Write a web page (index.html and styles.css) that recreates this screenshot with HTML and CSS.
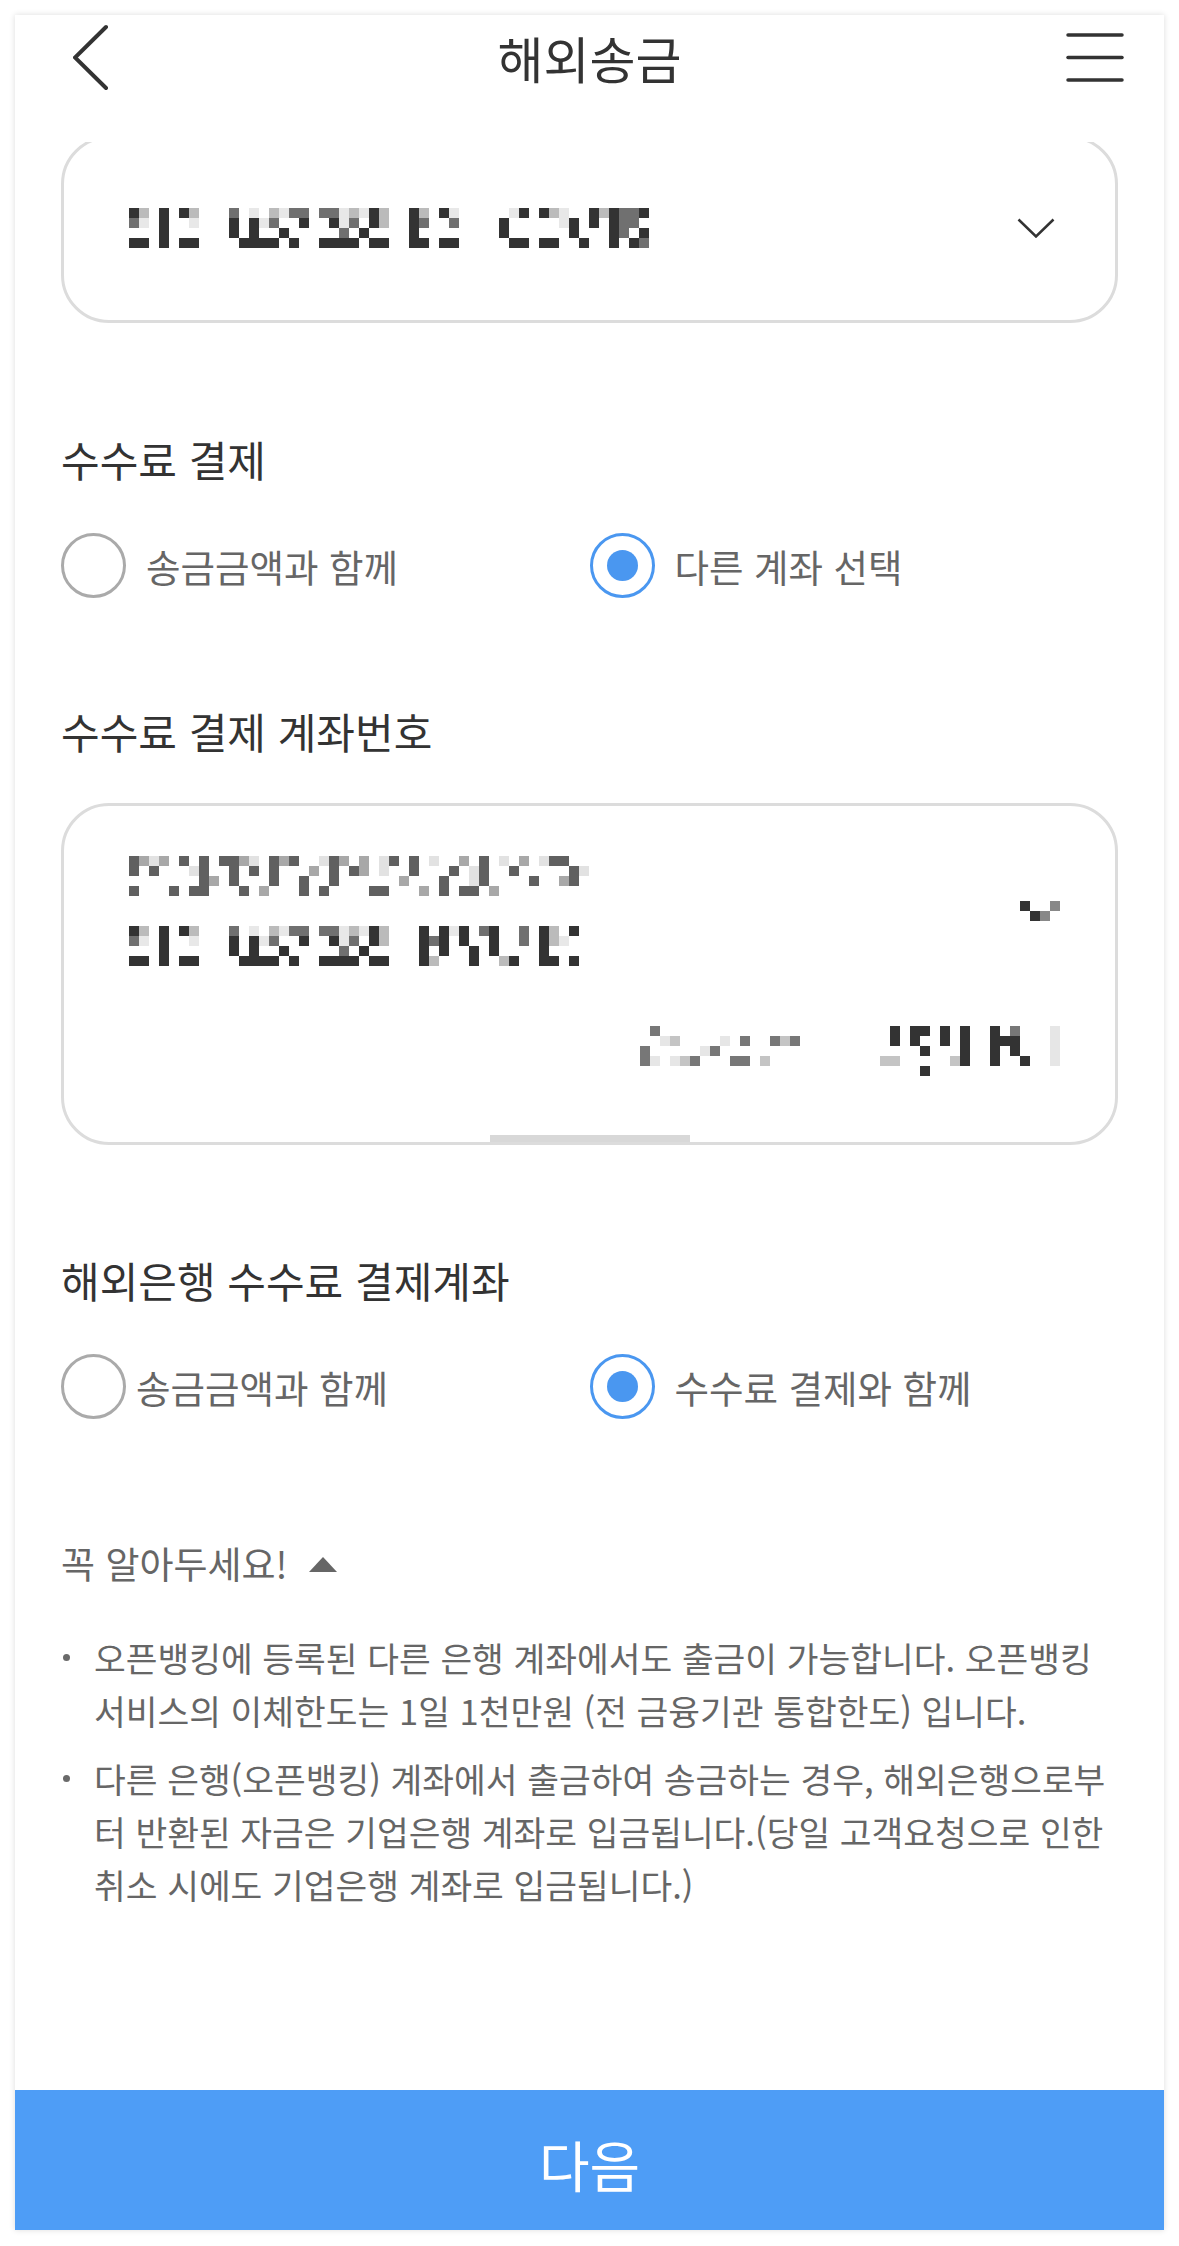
FILE: index.html
```html
<!DOCTYPE html>
<html lang="ko">
<head>
<meta charset="utf-8">
<title>해외송금</title>
<link rel="stylesheet" href="styles.css">
</head>
<body>
<div class="page">
  <div class="phone">
    <header class="topbar">
      <svg class="back" width="40" height="70" viewBox="0 0 40 70"><polyline points="33,4 2,34.5 33,65" fill="none" stroke="#333" stroke-width="4" stroke-linecap="round" stroke-linejoin="miter"/></svg>
      <h1 class="title">해외송금</h1>
      <svg class="menu" width="58" height="50" viewBox="0 0 58 50"><g stroke="#333" stroke-width="3.5" stroke-linecap="round"><line x1="2" y1="2" x2="56" y2="2"/><line x1="2" y1="24.5" x2="56" y2="24.5"/><line x1="2" y1="47" x2="56" y2="47"/></g></svg>
    </header>

    <main class="scroller">
      <div class="content">
        <div class="select-card">
          <svg class="mosaic" width="520" height="40" viewBox="0 0 52 4" shape-rendering="crispEdges">
            <path fill="#e8e8e8" d="M1 1h1v1h-1z M6 1h1v1h-1z M12 0h1v1h-1z M13 1h1v1h-1z M15 0h1v1h-1z M21 0h1v2h-1z M23 0h1v1h-1z M32 0h1v1h-1z M38 0h1v1h-1z M43 0h1v2h-1z"/>
            <path fill="#bbb" d="M1 0h1v1h-1z M6 0h1v1h-1z M14 0h1v1h-1z M22 0h1v1h-1z M25 0h1v2h-1z M29 0h1v1h-1z M42 0h1v1h-1z M47 0h1v1h-1z"/>
            <path fill="#707070" d="M0 1h1v1h-1z M10 0h1v1h-1z M14 1h1v1h-1z M16 0h2v1h-2z M19 0h2v1h-2z M21 2h1v1h-1z M22 1h1v1h-1z M29 1h1v1h-1z M32 1h1v1h-1z M49 0h1v3h-1z M50 0h1v2h-1z M51 3h1v1h-1z"/>
            <path fill="#333" d="M0 0h1v1h-1z M0 3h2v1h-2z M3 0h1v4h-1z M5 0h1v1h-1z M5 3h2v1h-2z M10 1h1v2h-1z M11 3h4v1h-4z M12 1h1v2h-1z M15 2h1v1h-1z M16 3h1v1h-1z M17 1h1v1h-1z M19 3h4v1h-4z M20 1h1v1h-1z M23 2h1v1h-1z M24 0h1v2h-1z M24 3h2v1h-2z M28 0h1v4h-1z M29 3h1v1h-1z M31 0h1v1h-1z M31 3h2v1h-2z M37 1h1v2h-1z M38 3h2v1h-2z M39 0h1v1h-1z M41 0h1v1h-1z M41 3h2v1h-2z M44 1h1v2h-1z M45 3h1v1h-1z M46 0h1v2h-1z M48 0h1v4h-1z M50 3h1v1h-1z M51 0h1v1h-1z M51 2h1v1h-1z"/>
          </svg>
          <svg class="chev" width="38" height="20" viewBox="0 0 38 20"><polyline points="1.5,1.5 19,18.5 36.5,1.5" fill="none" stroke="#333" stroke-width="2.5"/></svg>
        </div>

        <h2 class="section-title">수수료 결제</h2>
        <div class="radio-row">
          <label class="radio"><span class="radio-mark"></span><span>송금금액과 함께</span></label>
          <label class="radio"><span class="radio-mark on"></span><span>다른 계좌 선택</span></label>
        </div>

        <h2 class="section-title section-title--gap">수수료 결제 계좌번호</h2>
        <div class="acct-card">
          <div class="acct-main">
            <div class="acct-lines">
              <svg class="mosaic" width="460" height="40" viewBox="0 0 46 4" shape-rendering="crispEdges">
                <path fill="#e2e2e2" d="M2 0h1v1h-1z M6 1h1v1h-1z M12 0h1v1h-1z M19 0h1v1h-1z M25 0h1v2h-1z M30 0h1v1h-1z M34 1h1v2h-1z M37 0h1v1h-1z M41 0h1v1h-1z M45 1h1v1h-1z"/>
                <path fill="#a8a8a8" d="M1 0h1v1h-1z M3 0h1v1h-1z M8 2h1v1h-1z M11 0h1v1h-1z M13 3h1v1h-1z M15 0h1v1h-1z M18 1h1v1h-1z M21 0h1v1h-1z M23 0h1v2h-1z M27 2h1v1h-1z M29 3h1v1h-1z M33 0h1v1h-1z M36 3h1v1h-1z M39 0h1v1h-1z M43 2h1v1h-1z"/>
                <path fill="#606060" d="M0 0h1v2h-1z M2 1h1v1h-1z M5 0h1v1h-1z M4 3h1v1h-1z M7 0h1v3h-1z M9 0h2v1h-2z M10 1h1v2h-1z M12 1h1v1h-1z M14 0h1v3h-1z M16 0h1v1h-1z M17 2h1v2h-1z M20 0h1v3h-1z M22 1h1v1h-1z M24 3h2v1h-2z M26 0h1v1h-1z M28 0h1v2h-1z M31 2h1v2h-1z M32 1h1v1h-1z M35 0h1v3h-1z M38 1h1v1h-1z M40 2h1v1h-1z M42 0h2v1h-2z M44 1h1v2h-1z M0 3h1v1h-1z M6 3h2v1h-2z M11 3h1v1h-1z M19 3h1v1h-1z M33 3h2v1h-2z"/>
              </svg>
              <svg class="mosaic" width="450" height="40" viewBox="0 0 45 4" shape-rendering="crispEdges">
                <path fill="#e8e8e8" d="M1 1h1v1h-1z M6 1h1v1h-1z M12 0h1v1h-1z M13 1h1v1h-1z M15 0h1v1h-1z M21 0h1v2h-1z M23 0h1v1h-1z M32 0h1v1h-1z M43 1h1v1h-1z"/>
                <path fill="#bbb" d="M1 0h1v1h-1z M6 0h1v1h-1z M14 0h1v1h-1z M22 0h1v1h-1z M25 0h1v2h-1z M30 3h1v1h-1z M37 3h1v1h-1z M42 0h1v2h-1z"/>
                <path fill="#707070" d="M0 1h1v1h-1z M10 0h1v1h-1z M14 1h1v1h-1z M16 0h2v1h-2z M19 0h2v1h-2z M21 2h1v1h-1z M22 1h1v1h-1z M30 1h1v1h-1z M35 0h1v1h-1z M39 0h1v2h-1z"/>
                <path fill="#333" d="M0 0h1v1h-1z M0 3h2v1h-2z M3 0h1v4h-1z M5 0h1v1h-1z M5 3h2v1h-2z M10 1h1v2h-1z M11 3h4v1h-4z M12 1h1v2h-1z M15 2h1v1h-1z M16 3h1v1h-1z M17 1h1v1h-1z M19 3h4v1h-4z M20 1h1v1h-1z M23 2h1v1h-1z M24 0h1v2h-1z M24 3h2v1h-2z M29 0h1v4h-1z M31 0h1v3h-1z M33 0h1v2h-1z M34 2h1v2h-1z M36 0h1v3h-1z M38 3h1v1h-1z M41 0h1v4h-1z M42 3h1v1h-1z M44 0h1v1h-1z M44 3h1v1h-1z"/>
              </svg>
            </div>
            <svg class="mark" width="40" height="20" viewBox="0 0 4 2" shape-rendering="crispEdges">
              <path fill="#333" d="M0 0h1v1h-1z M1 1h1v1h-1z"/>
              <path fill="#888" d="M3 0h1v1h-1z M2 1h1v1h-1z"/>
            </svg>
          </div>
          <div class="acct-balance">
            <svg class="mosaic" width="420" height="50" viewBox="0 0 42 5" shape-rendering="crispEdges">
              <path fill="#e6e6e6" d="M2 1h1v1h-1z M1 3h1v1h-1z M8 1h1v1h-1z M41 0h1v4h-1z M6 2h1v1h-1z M3 3h1v1h-1z"/>
              <path fill="#c4c4c4" d="M3 1h1v1h-1z M4 3h2v1h-2z M14 1h1v1h-1z M12 3h1v1h-1z M24 3h2v1h-2z M31 3h1v1h-1z"/>
              <path fill="#777" d="M1 0h1v1h-1z M0 2h1v2h-1z M7 2h1v1h-1z M10 1h1v1h-1z M10 3h1v1h-1z M13 1h1v1h-1z M15 1h1v1h-1z M9 3h1v1h-1z M5 3h1v1h-1z M37 0h1v1h-1z"/>
              <path fill="#333" d="M25 0h1v2h-1z M27 0h2v1h-2z M27 1h1v1h-1z M28 2h1v1h-1z M30 0h1v2h-1z M32 0h1v4h-1z M35 0h1v4h-1z M36 1h1v1h-1z M37 1h1v2h-1z M38 3h1v1h-1z M28 4h1v1h-1z"/>
            </svg>
          </div>
          <span class="scroll-thumb"></span>
        </div>

        <h2 class="section-title section-title--after-card">해외은행 수수료 결제계좌</h2>
        <div class="radio-row">
          <label class="radio radio--tight"><span class="radio-mark"></span><span>송금금액과 함께</span></label>
          <label class="radio"><span class="radio-mark on"></span><span>수수료 결제와 함께</span></label>
        </div>

        <div class="notice-head">
          <span>꼭 알아두세요!</span>
          <svg class="tri" width="28" height="15" viewBox="0 0 28 15"><polygon points="14,0 28,15 0,15" fill="#666"/></svg>
        </div>
        <ul class="notice-list">
          <li>
            <span class="line">오픈뱅킹에 등록된 다른 은행 계좌에서도 출금이 가능합니다. 오픈뱅킹</span>
            <span class="line">서비스의 이체한도는 1일 1천만원 (전 금융기관 통합한도) 입니다.</span>
          </li>
          <li>
            <span class="line">다른 은행(오픈뱅킹) 계좌에서 출금하여 송금하는 경우, 해외은행으로부</span>
            <span class="line">터 반환된 자금은 기업은행 계좌로 입금됩니다.(당일 고객요청으로 인한</span>
            <span class="line">취소 시에도 기업은행 계좌로 입금됩니다.)</span>
          </li>
        </ul>
      </div>
    </main>

    <button class="next-btn" type="button">다음</button>
  </div>
</div>
</body>
</html>
```

FILE: styles.css
```css
html, body {
  margin: 0;
  padding: 0;
  background: #ffffff;
}

body {
  font-family: "Noto Sans CJK KR", "Noto Sans", sans-serif;
  color: #333;
}

.page {
  padding: 15px 15px 16px;
}

.phone {
  height: 2215px;
  background: #fff;
  box-shadow: 0 0 6px rgba(0, 0, 0, 0.14);
  display: flex;
  flex-direction: column;
}

/* header */
.topbar {
  flex: none;
  height: 127px;
  display: grid;
  grid-template-columns: 110px 1fr 110px;
  align-items: start;
  background: #fff;
}

.back {
  display: block;
  margin: 8px 0 0 58px;
}

.title {
  margin: 14px 0 0;
  text-align: center;
  font-size: 50px;
  line-height: 56px;
  font-weight: 400;
  color: #333;
}

.menu {
  display: block;
  justify-self: end;
  margin: 18px 40px 0 0;
}

/* scroll area */
.scroller {
  flex: 1;
  overflow: hidden;
}

.content {
  margin-top: -6px;
  padding: 0 46px;
}

.mosaic,
.mark,
.chev {
  display: block;
}

.select-card {
  height: 187px;
  box-sizing: border-box;
  border: 3px solid #dcdcdc;
  border-radius: 48px;
  display: flex;
  align-items: center;
  justify-content: space-between;
  padding: 4px 60px 8px 65px;
}

.section-title {
  margin: 110px 0 0;
  font-size: 42px;
  line-height: 52px;
  font-weight: 400;
  color: #333;
}

.section-title--gap {
  margin-top: 107px;
}

.section-title--after-card {
  margin-top: 109px;
}

.radio-row {
  margin-top: 48px;
  display: grid;
  grid-template-columns: 1fr 1fr;
}

.radio {
  display: flex;
  align-items: center;
  gap: 20px;
  font-size: 37.5px;
  line-height: 65px;
  color: #666;
}

.radio--tight {
  gap: 10px;
}

.radio-mark {
  flex: none;
  width: 65px;
  height: 65px;
  box-sizing: border-box;
  border: 3px solid #aaaaaa;
  border-radius: 50%;
  display: flex;
  align-items: center;
  justify-content: center;
}

.radio-mark.on {
  border-color: #4a97f0;
}

.radio-mark.on::after {
  content: "";
  width: 31px;
  height: 31px;
  border-radius: 50%;
  background: #4a97f0;
}

/* account card */
.acct-card {
  position: relative;
  margin-top: 46px;
  height: 342px;
  box-sizing: border-box;
  border: 3px solid #dcdcdc;
  border-radius: 48px;
  padding: 50px 55px 0 65px;
}

.acct-main {
  display: flex;
  align-items: center;
  justify-content: space-between;
}

.acct-lines {
  display: flex;
  flex-direction: column;
  gap: 30px;
}

.acct-balance {
  margin-top: 60px;
  display: flex;
  justify-content: flex-end;
}

.scroll-thumb {
  position: absolute;
  left: 50%;
  bottom: 0;
  width: 200px;
  height: 7px;
  margin-left: -100px;
  background: #d8d8d8;
}

/* notice */
.notice-head {
  margin-top: 122px;
  display: flex;
  align-items: center;
  gap: 21px;
  font-size: 37px;
  line-height: 44px;
  color: #666;
}

.tri {
  display: block;
  margin-top: 2px;
}

.notice-list {
  list-style: none;
  margin: 46px 0 0;
  padding: 0;
}

.notice-list li {
  position: relative;
  padding-left: 33px;
  font-size: 34.5px;
  line-height: 53px;
  color: #666;
}

.notice-list li + li {
  margin-top: 15px;
}

.notice-list li::before {
  content: "";
  position: absolute;
  left: 2px;
  top: 23px;
  width: 7px;
  height: 7px;
  border-radius: 50%;
  background: #6a6a6a;
}

.notice-list .line {
  display: block;
  white-space: nowrap;
}

/* bottom button */
.next-btn {
  flex: none;
  height: 140px;
  width: 100%;
  border: 0;
  margin: 0;
  padding: 6px 0 0;
  background: #4e9df6;
  color: #fff;
  font-family: "Noto Sans CJK KR", "Noto Sans", sans-serif;
  font-size: 55px;
  font-weight: 400;
}
```
